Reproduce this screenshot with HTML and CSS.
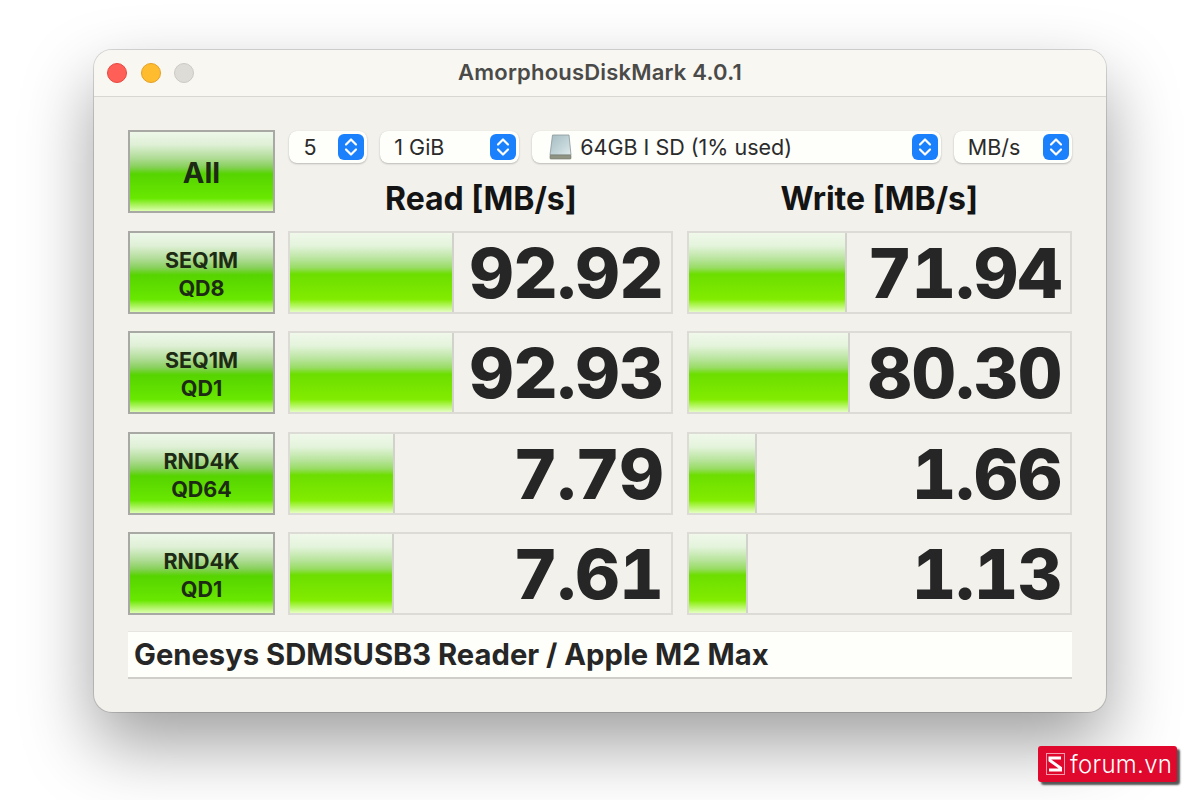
FILE: index.html
```html
<!DOCTYPE html>
<html lang="en">
<head>
  <meta charset="UTF-8">
  <title>AmorphousDiskMark 4.0.1</title>
  <link rel="stylesheet" href="styles.css">
</head>
<body>
  <div class="window">
    <div class="titlebar">
      <div class="lights">
        <span class="light red"></span>
        <span class="light yellow"></span>
        <span class="light grey"></span>
      </div>
      <div class="title">AmorphousDiskMark 4.0.1</div>
    </div>

    <div class="content">
      <div class="grid">
        <div class="run-btn run-all">All</div>

        <div class="top">
          <div class="selects">
            <div class="select sel-count">
              <span class="sel-text">5</span>
              <svg class="stepper" viewBox="0 0 26 26"><rect width="26" height="26" rx="6" fill="#1a80fb"/><path d="M8 10.5 L13 5.5 L18 10.5 M8 15.5 L13 20.5 L18 15.5" fill="none" stroke="#fff" stroke-width="2.2" stroke-linecap="round" stroke-linejoin="round"/></svg>
            </div>
            <div class="select sel-size">
              <span class="sel-text">1 GiB</span>
              <svg class="stepper" viewBox="0 0 26 26"><rect width="26" height="26" rx="6" fill="#1a80fb"/><path d="M8 10.5 L13 5.5 L18 10.5 M8 15.5 L13 20.5 L18 15.5" fill="none" stroke="#fff" stroke-width="2.2" stroke-linecap="round" stroke-linejoin="round"/></svg>
            </div>
            <div class="select sel-drive">
              <svg class="disk" viewBox="0 0 23 26">
                <defs><linearGradient id="diskface" x1="0" y1="0" x2="1" y2="1"><stop offset="0" stop-color="#a4bcc0"/><stop offset=".6" stop-color="#c4d6da"/><stop offset="1" stop-color="#dfe9ea"/></linearGradient></defs>
                <path d="M3.5 1 H20 L22 21 H1 Z" fill="url(#diskface)" stroke="#8b979b" stroke-width=".8"/>
                <rect x="1" y="21" width="21" height="4" rx=".8" fill="#8f9482" stroke="#6f7468" stroke-width=".6"/>
              </svg>
              <span class="sel-text">64GB I SD (1% used)</span>
              <svg class="stepper" viewBox="0 0 26 26"><rect width="26" height="26" rx="6" fill="#1a80fb"/><path d="M8 10.5 L13 5.5 L18 10.5 M8 15.5 L13 20.5 L18 15.5" fill="none" stroke="#fff" stroke-width="2.2" stroke-linecap="round" stroke-linejoin="round"/></svg>
            </div>
            <div class="select sel-unit">
              <span class="sel-text">MB/s</span>
              <svg class="stepper" viewBox="0 0 26 26"><rect width="26" height="26" rx="6" fill="#1a80fb"/><path d="M8 10.5 L13 5.5 L18 10.5 M8 15.5 L13 20.5 L18 15.5" fill="none" stroke="#fff" stroke-width="2.2" stroke-linecap="round" stroke-linejoin="round"/></svg>
            </div>
          </div>
          <div class="heads">
            <div class="head">Read [MB/s]</div>
            <div class="head">Write [MB/s]</div>
          </div>
        </div>

        <div class="run-btn">SEQ1M<br>QD8</div>
        <div class="cell"><div class="bar" style="width:164px"></div><div class="num">92.92</div></div>
        <div class="cell"><div class="bar" style="width:158px"></div><div class="num">71.94</div></div>

        <div class="run-btn">SEQ1M<br>QD1</div>
        <div class="cell"><div class="bar" style="width:164px"></div><div class="num">92.93</div></div>
        <div class="cell"><div class="bar" style="width:161px"></div><div class="num">80.30</div></div>

        <div class="run-btn">RND4K<br>QD64</div>
        <div class="cell"><div class="bar" style="width:105px"></div><div class="num">7.79</div></div>
        <div class="cell"><div class="bar" style="width:68px"></div><div class="num">1.66</div></div>

        <div class="run-btn">RND4K<br>QD1</div>
        <div class="cell"><div class="bar" style="width:104px"></div><div class="num">7.61</div></div>
        <div class="cell"><div class="bar" style="width:59px"></div><div class="num">1.13</div></div>
      </div>

      <div class="info">Genesys SDMSUSB3 Reader / Apple M2 Max</div>
    </div>
  </div>

  <div class="badge">
    <svg class="badge-logo" viewBox="0 0 19 22">
      <rect x=".5" y=".5" width="18" height="21" fill="none" stroke="#f59aac" stroke-width="1"/>
      <path d="M15 5 H4 V7.5 L14.5 15 V17 H3" fill="none" stroke="#fff" stroke-width="3"/>
    </svg>
    <span class="badge-text">forum.vn</span>
  </div>
</body>
</html>
```

FILE: styles.css
```css
html, body {
  height: 100%;
}

body {
  margin: 0;
  background: #fff;
  font-family: Inter, "Liberation Sans", sans-serif;
  color: #222;
  overflow: hidden;
}

.window {
  width: 1012px;
  height: 662px;
  margin: 50px 0 0 94px;
  box-sizing: border-box;
  background: #f2f1ec;
  border-radius: 18px;
  box-shadow: 0 0 0 1px rgba(0, 0, 0, 0.14), 0 32px 70px rgba(0, 0, 0, 0.38);
}

.titlebar {
  position: relative;
  height: 43px;
  padding-bottom: 3px;
  display: flex;
  align-items: center;
  justify-content: center;
  background: #f8f7f2;
  border-bottom: 1px solid #d8d7d2;
  border-radius: 18px 18px 0 0;
}

.lights {
  position: absolute;
  left: 13px;
  top: 13px;
  display: flex;
  gap: 13.5px;
}

.light {
  width: 20px;
  height: 20px;
  box-sizing: border-box;
  border-radius: 50%;
  border: 1px solid;
}

.red { background: #ff5f57; border-color: #e5483f; }
.yellow { background: #febc2e; border-color: #e3a125; }
.grey { background: #dddcd6; border-color: #cbcac4; }

.title {
  font-size: 22px;
  font-weight: 600;
  color: #4a4a48;
  letter-spacing: 0.2px;
}

.content {
  padding: 33px 33px 0 34px;
}

.grid {
  display: grid;
  grid-template-columns: 147px 385px 385px;
  grid-template-rows: repeat(5, 83px);
  column-gap: 13.4px;
  row-gap: 17.5px;
}

.run-btn {
  display: flex;
  align-items: center;
  justify-content: center;
  text-align: center;
  box-sizing: border-box;
  padding-top: 3px;
  border: 2px solid #a8a8a4;
  background: linear-gradient(to bottom, #eef8ea 0%, #dff0d6 16%, #b0dc96 33%, #88d05c 44%, #56d400 53%, #68e800 84%, #a8f258 92%, #dcffb0 100%);
  font-size: 21.5px;
  font-weight: 700;
  line-height: 28px;
  color: #1d2a14;
}

.run-all {
  font-size: 29px;
}

.top {
  grid-column: 2 / 4;
  display: flex;
  flex-direction: column;
  padding-top: 1px;
}

.selects {
  display: flex;
  gap: 13px;
}

.select {
  height: 32px;
  box-sizing: border-box;
  display: flex;
  align-items: center;
  padding: 0 3px 0 14px;
  background: #fefefb;
  border-radius: 8px;
  box-shadow: 0 1px 2px rgba(0, 0, 0, 0.22), 0 0 1px rgba(0, 0, 0, 0.1);
  font-size: 21.5px;
  color: #2b2b2b;
}

.sel-text {
  flex: 1;
}

.sel-count { width: 78px; margin-left: 1px; }
.sel-size { width: 139px; }
.sel-drive { width: 409px; padding-left: 17px; }
.sel-unit { width: 118px; }

.stepper {
  width: 26px;
  height: 26px;
  flex: none;
}

.disk {
  width: 23px;
  height: 26px;
  margin-right: 8px;
  flex: none;
}

.heads {
  display: grid;
  grid-template-columns: 385px 385px;
  column-gap: 13.4px;
  margin-top: 17.5px;
}

.head {
  text-align: center;
  font-size: 32px;
  font-weight: 700;
  color: #141414;
  line-height: 36px;
}

.cell {
  display: flex;
  box-sizing: border-box;
  border: 2px solid #dcdbd6;
  overflow: hidden;
}

.bar {
  flex: none;
  box-sizing: border-box;
  border-right: 2px solid #d2d2cc;
  background: linear-gradient(to bottom, #f0f8ea 0%, #e4f4dc 16%, #b8e49c 33%, #98dc64 44%, #6cde00 52%, #82ec00 84%, #b4f660 92%, #e4ffc0 100%);
}

.num {
  flex: 1;
  text-align: right;
  padding-right: 8px;
  font-size: 69px;
  font-weight: 800;
  font-variant-numeric: tabular-nums;
  letter-spacing: -0.5px;
  line-height: 81px;
  color: #262626;
}

.info {
  margin-top: 16px;
  width: 944px;
  height: 48px;
  box-sizing: border-box;
  padding-left: 6px;
  display: flex;
  align-items: center;
  background: #fefefa;
  border-top: 1px solid #e6e5e0;
  border-bottom: 2px solid #cfcec9;
  font-size: 29.2px;
  font-weight: 700;
  color: #262626;
}

.badge {
  position: absolute;
  left: 1038px;
  top: 746px;
  width: 139px;
  height: 36px;
  box-sizing: border-box;
  display: flex;
  align-items: center;
  gap: 5px;
  padding-left: 8px;
  background: #e0082d;
  border-radius: 3px;
  box-shadow: 3px 3px 2px #555;
  color: #fff;
}

.badge-logo {
  width: 19px;
  height: 22px;
  flex: none;
}

.badge-text {
  font-size: 24px;
  font-weight: 300;
  letter-spacing: 0.3px;
}
```
